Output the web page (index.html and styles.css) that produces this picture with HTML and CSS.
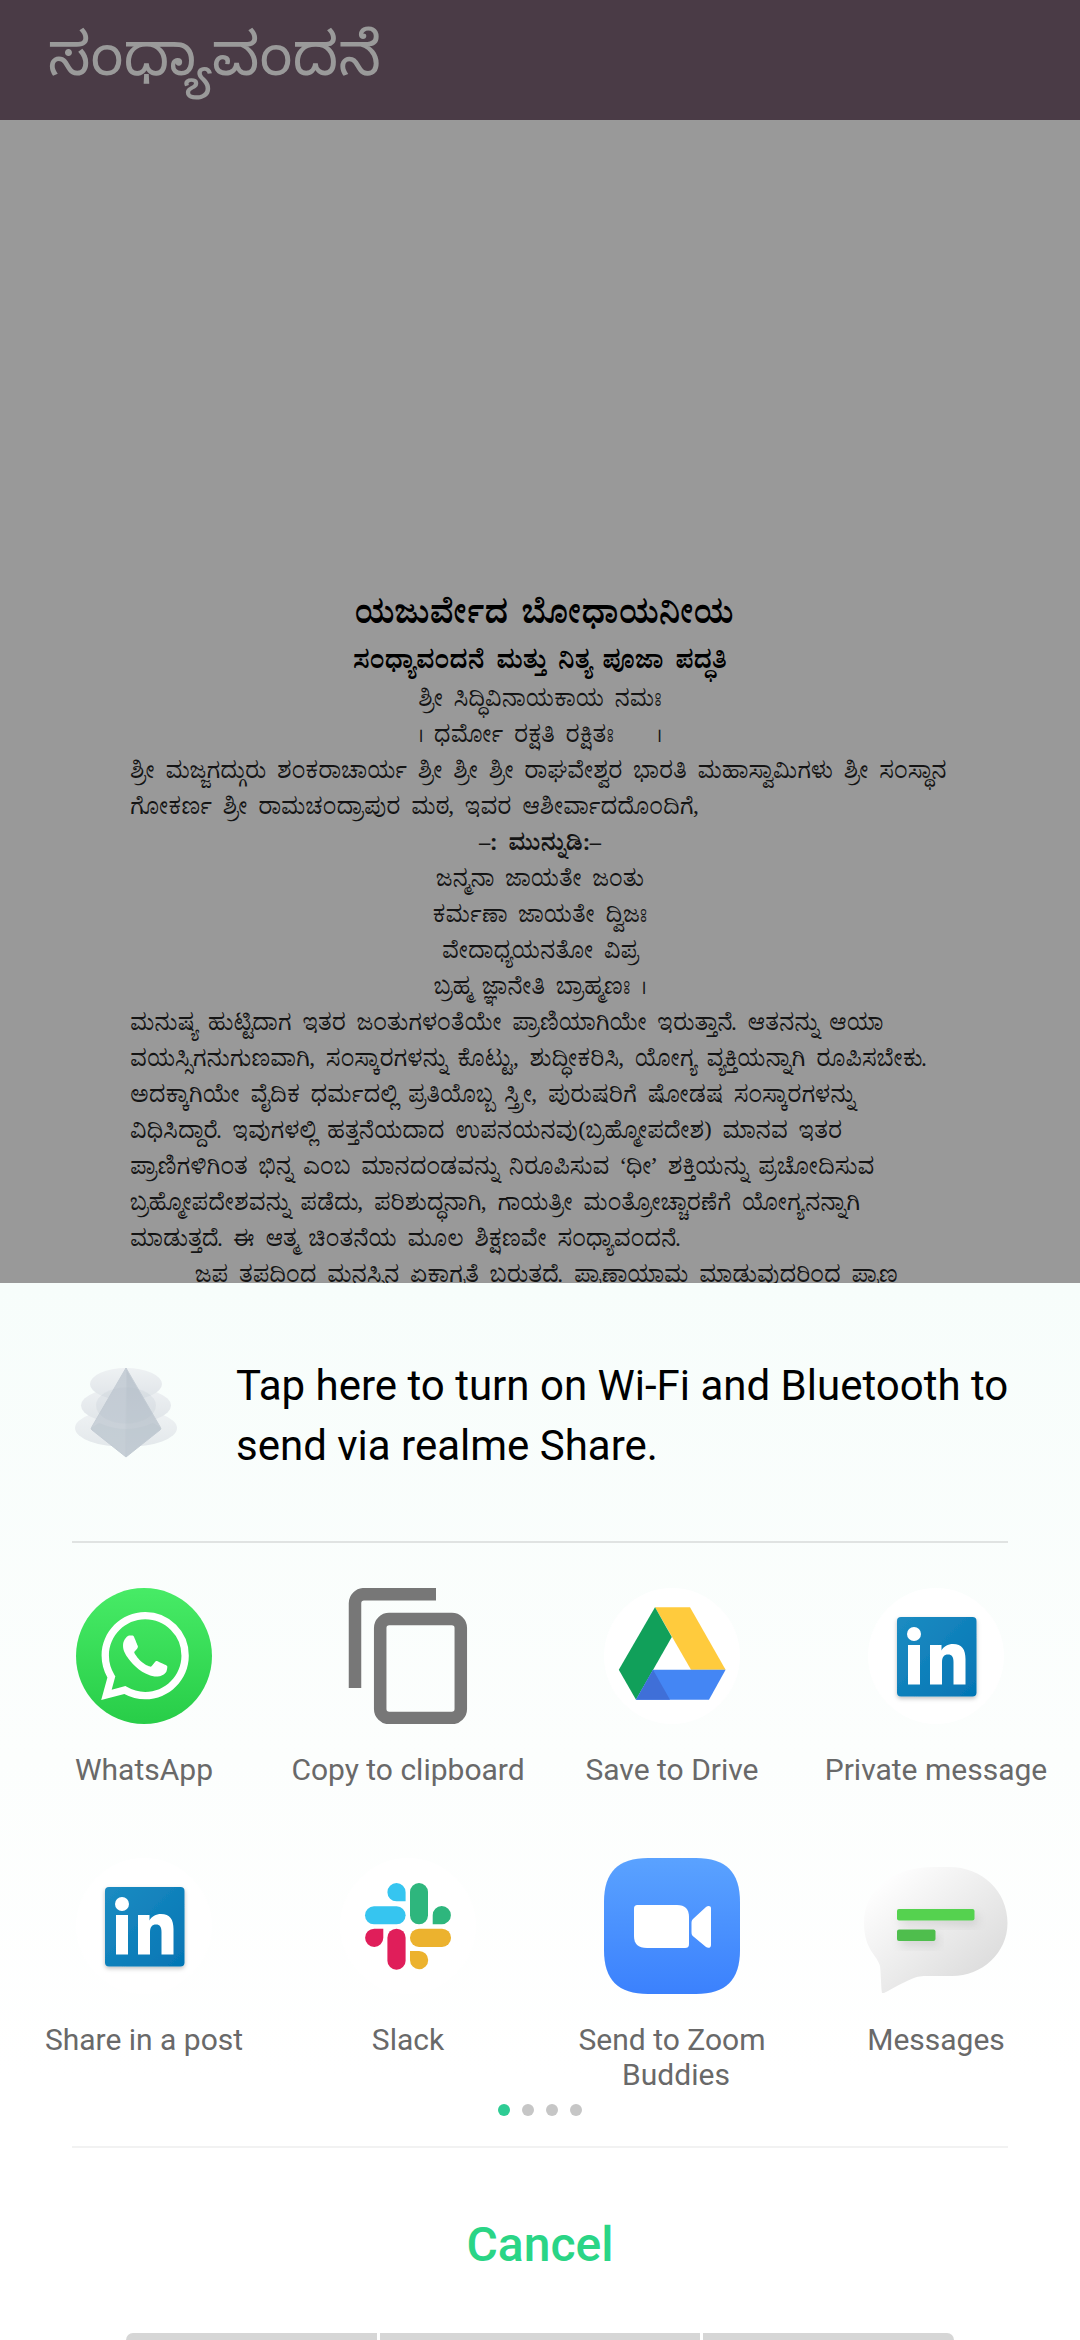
FILE: index.html
```html
<!DOCTYPE html>
<html lang="kn">
<head>
<meta charset="utf-8">
<title>ಸಂಧ್ಯಾವಂದನೆ</title>
<link rel="stylesheet" href="styles.css">
</head>
<body>
<header class="appbar"><h1 class="apptitle">ಸಂಧ್ಯಾವಂದನೆ</h1></header>
<main class="doc">
  <p class="line center title">ಯಜುರ್ವೇದ ಬೋಧಾಯನೀಯ</p>
  <p class="line center sub">ಸಂಧ್ಯಾವಂದನೆ ಮತ್ತು ನಿತ್ಯ ಪೂಜಾ ಪದ್ಧತಿ</p>
  <p class="line center">ಶ್ರೀ ಸಿದ್ಧಿವಿನಾಯಕಾಯ ನಮಃ</p>
  <p class="line center">। ಧರ್ಮೋ ರಕ್ಷತಿ ರಕ್ಷಿತಃ &nbsp; &nbsp;।</p>
  <p class="line">ಶ್ರೀ ಮಜ್ಜಗದ್ಗುರು ಶಂಕರಾಚಾರ್ಯ ಶ್ರೀ ಶ್ರೀ ಶ್ರೀ ರಾಘವೇಶ್ವರ ಭಾರತಿ ಮಹಾಸ್ವಾಮಿಗಳು ಶ್ರೀ ಸಂಸ್ಥಾನ</p>
  <p class="line">ಗೋಕರ್ಣ ಶ್ರೀ ರಾಮಚಂದ್ರಾಪುರ ಮಠ, ಇವರ ಆಶೀರ್ವಾದದೊಂದಿಗೆ,</p>
  <p class="line center strong">–: ಮುನ್ನುಡಿ:–</p>
  <p class="line center">ಜನ್ಮನಾ ಜಾಯತೇ ಜಂತು</p>
  <p class="line center">ಕರ್ಮಣಾ ಜಾಯತೇ ದ್ವಿಜಃ</p>
  <p class="line center">ವೇದಾಧ್ಯಯನತೋ ವಿಪ್ರ</p>
  <p class="line center">ಬ್ರಹ್ಮ ಜ್ಞಾನೇತಿ ಬ್ರಾಹ್ಮಣಃ ।</p>
  <p class="line">ಮನುಷ್ಯ ಹುಟ್ಟಿದಾಗ ಇತರ ಜಂತುಗಳಂತೆಯೇ ಪ್ರಾಣಿಯಾಗಿಯೇ ಇರುತ್ತಾನೆ. ಆತನನ್ನು ಆಯಾ</p>
  <p class="line">ವಯಸ್ಸಿಗನುಗುಣವಾಗಿ, ಸಂಸ್ಕಾರಗಳನ್ನು ಕೊಟ್ಟು, ಶುದ್ಧೀಕರಿಸಿ, ಯೋಗ್ಯ ವ್ಯಕ್ತಿಯನ್ನಾಗಿ ರೂಪಿಸಬೇಕು.</p>
  <p class="line">ಅದಕ್ಕಾಗಿಯೇ ವೈದಿಕ ಧರ್ಮದಲ್ಲಿ ಪ್ರತಿಯೊಬ್ಬ ಸ್ತ್ರೀ, ಪುರುಷರಿಗೆ ಷೋಡಷ ಸಂಸ್ಕಾರಗಳನ್ನು</p>
  <p class="line">ವಿಧಿಸಿದ್ದಾರೆ. ಇವುಗಳಲ್ಲಿ ಹತ್ತನೆಯದಾದ ಉಪನಯನವು(ಬ್ರಹ್ಮೋಪದೇಶ) ಮಾನವ ಇತರ</p>
  <p class="line">ಪ್ರಾಣಿಗಳಿಗಿಂತ ಭಿನ್ನ ಎಂಬ ಮಾನದಂಡವನ್ನು ನಿರೂಪಿಸುವ ‘ಧೀ’ ಶಕ್ತಿಯನ್ನು ಪ್ರಚೋದಿಸುವ</p>
  <p class="line">ಬ್ರಹ್ಮೋಪದೇಶವನ್ನು ಪಡೆದು, ಪರಿಶುದ್ಧನಾಗಿ, ಗಾಯತ್ರೀ ಮಂತ್ರೋಚ್ಚಾರಣೆಗೆ ಯೋಗ್ಯನನ್ನಾಗಿ</p>
  <p class="line">ಮಾಡುತ್ತದೆ. ಈ ಆತ್ಮ ಚಿಂತನೆಯ ಮೂಲ ಶಿಕ್ಷಣವೇ ಸಂಧ್ಯಾವಂದನೆ.</p>
  <p class="line indent">ಜಪ ತಪದಿಂದ ಮನಸ್ಸಿನ ಏಕಾಗ್ರತೆ ಬರುತ್ತದೆ. ಪ್ರಾಣಾಯಾಮ ಮಾಡುವುದರಿಂದ ಪ್ರಾಣ</p>
</main>
<section class="sheet">
  <div class="nearby">
    <svg class="nearby-icon" viewBox="0 0 102 91">
      <defs>
        <linearGradient id="e1" x1="0" y1="0" x2="0" y2="1"><stop offset="0" stop-color="#eef1f3"/><stop offset="1" stop-color="#dfe4e8"/></linearGradient>
        <linearGradient id="kl" x1="0" y1="0" x2="0" y2="1"><stop offset="0" stop-color="#c6ced6"/><stop offset="1" stop-color="#ccd3da"/></linearGradient>
        <linearGradient id="kr" x1="0" y1="0" x2="0" y2="1"><stop offset="0" stop-color="#bdc6cf"/><stop offset="1" stop-color="#c8d0d7"/></linearGradient>
      </defs>
      <ellipse cx="51" cy="61" rx="51" ry="19" fill="url(#e1)" opacity=".85"/>
      <ellipse cx="51" cy="38.500" rx="45" ry="18" fill="url(#e1)"/>
      <ellipse cx="51" cy="17" rx="36" ry="16" fill="url(#e1)"/>
      <path d="M51 1 16.500 60.500Q15.500 62 17 63L51 90Z" fill="url(#kl)" stroke="#c6ced6" stroke-linejoin="round"/>
      <path d="M51 1 85.500 60.500Q86.500 62 85 63L51 90Z" fill="url(#kr)" stroke="#c6ced6" stroke-linejoin="round"/>
      <ellipse cx="51" cy="38.500" rx="30" ry="18" fill="#b3bdc7" opacity=".18"/>
      <path d="M24 56Q51 68 78 56L85.500 60.500Q86.500 62 85 63L51 90 17 63Q15.500 62 16.500 60.500Z" fill="#b3bdc7" opacity=".22"/>
    </svg>
    <p class="nearby-text">Tap here to turn on Wi-Fi and Bluetooth to send via realme Share.</p>
  </div>
  <div class="rule"></div>
  <div class="apps">
    <div class="app">
      <svg class="icon" viewBox="0 0 136 136">
        <defs><linearGradient id="wa" x1="0" y1="0" x2="0" y2="1"><stop offset="0" stop-color="#47eb66"/><stop offset="1" stop-color="#28cd48"/></linearGradient></defs>
        <circle cx="68" cy="68" r="68" fill="url(#wa)"/>
        <path transform="translate(25 24) scale(3.667)" fill="#fff" d="M17.472 14.382c-.297-.149-1.758-.867-2.03-.967-.273-.099-.471-.148-.67.15-.197.297-.767.966-.94 1.164-.173.199-.347.223-.644.075-.297-.15-1.255-.463-2.39-1.475-.883-.788-1.48-1.761-1.653-2.059-.173-.297-.018-.458.13-.606.134-.133.298-.347.446-.52.149-.174.198-.298.298-.497.099-.198.05-.371-.025-.52-.075-.149-.669-1.612-.916-2.207-.242-.579-.487-.5-.669-.51-.173-.008-.371-.01-.57-.01-.198 0-.52.074-.792.372-.272.297-1.04 1.016-1.04 2.479 0 1.462 1.065 2.875 1.213 3.074.149.198 2.096 3.2 5.077 4.487.709.306 1.262.489 1.694.625.712.227 1.36.195 1.871.118.571-.085 1.758-.719 2.006-1.413.248-.694.248-1.289.173-1.413-.074-.124-.272-.198-.57-.347m-5.421 7.403h-.004a9.87 9.87 0 01-5.031-1.378l-.361-.214-3.741.982.998-3.648-.235-.374a9.86 9.86 0 01-1.51-5.26c.001-5.45 4.436-9.884 9.888-9.884 2.64 0 5.122 1.03 6.988 2.898a9.825 9.825 0 012.893 6.994c-.003 5.45-4.437 9.884-9.885 9.884m8.413-18.297A11.815 11.815 0 0012.05 0C5.495 0 .16 5.335.157 11.892c0 2.096.547 4.142 1.588 5.945L.057 24l6.305-1.654a11.882 11.882 0 005.683 1.448h.005c6.554 0 11.89-5.335 11.893-11.893a11.821 11.821 0 00-3.48-8.413z"/>
      </svg>
      <span class="label">WhatsApp</span>
    </div>
    <div class="app">
      <svg class="icon" viewBox="0 0 136 136">
        <path d="M96 6.200H24a9 9 0 0 0-9 9V100" fill="none" stroke="#777" stroke-width="12.500"/>
        <rect x="40.200" y="31" width="80.600" height="99" rx="9" fill="none" stroke="#777" stroke-width="12.500"/>
      </svg>
      <span class="label">Copy to clipboard</span>
    </div>
    <div class="app">
      <svg class="icon" viewBox="0 0 136 136">
        <circle cx="68" cy="68" r="68" fill="#fff"/>
        <path d="M51 19.300 86 19.300 121.600 81.700H87Z" fill="#ffcb3d"/>
        <path d="M51 19.300 67.800 49 32 111.700 14.800 81.700Z" fill="#11a05a"/>
        <path d="M49 81.700H121.600L105 111.700H32Z" fill="#4486f4"/>
        <path d="M49 81.700 66 111.700H32Z" fill="#3f6fd8"/>
      </svg>
      <span class="label">Save to Drive</span>
    </div>
    <div class="app">
      <svg class="icon" viewBox="0 0 136 136">
        <defs>
          <linearGradient id="li" x1="0" y1="0" x2="1" y2="1"><stop offset="0" stop-color="#1c8cc2"/><stop offset="1" stop-color="#0475b4"/></linearGradient>
          <filter id="lish" x="-20%" y="-20%" width="140%" height="140%"><feDropShadow dx="0" dy="2" stdDeviation="2" flood-color="#000" flood-opacity=".25"/></filter>
          <g id="linkedin">
            <circle cx="68" cy="68" r="68" fill="#fff"/>
            <rect x="29" y="29" width="79.500" height="79.500" rx="4" fill="url(#li)" filter="url(#lish)"/>
            <circle cx="46" cy="46" r="7" fill="#fff"/>
            <rect x="40" y="57" width="12" height="39.500" fill="#fff"/>
            <path d="M62 57H73.500V62.500C75.500 58.500 80 56 85 56 94 56 97.500 61.500 97.500 71V96.500H85.500V74C85.500 69 84 66.500 80 66.500 76 66.500 74 69 74 74V96.500H62Z" fill="#fff"/>
          </g>
        </defs>
        <use href="#linkedin"/>
      </svg>
      <span class="label">Private message</span>
    </div>
    <div class="app">
      <svg class="icon" viewBox="0 0 136 136"><use href="#linkedin"/></svg>
      <span class="label">Share in a post</span>
    </div>
    <div class="app">
      <svg class="icon" viewBox="0 0 136 136">
        <circle cx="68" cy="68" r="68" fill="#fff"/>
        <g transform="translate(25 25)">
          <rect x="0" y="23.300" width="40.600" height="18" rx="9" fill="#36c5f0"/>
          <path d="M40.600 18.300H31.500A9.100 9.100 0 1 1 40.600 9.200Z" fill="#36c5f0"/>
          <rect x="45" y="0" width="18" height="41.300" rx="9" fill="#2eb67d"/>
          <path d="M67.700 41.300V32.300A9.100 9.100 0 1 1 76.800 41.300Z" fill="#2eb67d"/>
          <rect x="22.400" y="45.700" width="18.200" height="41" rx="9" fill="#e01e5a"/>
          <path d="M18.300 45.700V54.800A9.100 9.100 0 1 1 9.200 45.700Z" fill="#e01e5a"/>
          <rect x="45" y="45.700" width="41" height="18.300" rx="9" fill="#ecb22e"/>
          <path d="M45 68H54A9.100 9.100 0 1 1 45 77.200Z" fill="#ecb22e"/>
        </g>
      </svg>
      <span class="label">Slack</span>
    </div>
    <div class="app">
      <svg class="icon" viewBox="0 0 136 136">
        <defs><linearGradient id="zm" x1="0" y1="0" x2="0" y2="1"><stop offset="0" stop-color="#5aa2ff"/><stop offset="1" stop-color="#3b81fd"/></linearGradient></defs>
        <path d="M44 0H92C122 0 136 14 136 44V92C136 122 122 136 92 136H44C14 136 0 122 0 92V44C0 14 14 0 44 0Z" fill="url(#zm)"/>
        <path d="M34 47H73C81 47 85 51 85 59V86C85 89 83.500 90 81 90H43C34 90 30 86 30 78V51C30 48 31 47 34 47Z" fill="#fff"/>
        <path d="M87.500 65C87.500 63 88 62 89.500 60.500L102 49C104 47.500 107 47.500 107 50.500V87C107 90 104 90.500 102 89L90 79C88 77.500 87.500 76.500 87.500 74Z" fill="#fff"/>
      </svg>
      <span class="label">Send to Zoom <span class="label-shift">Buddies</span></span>
    </div>
    <div class="app">
      <svg class="icon icon-wide" viewBox="0 0 144 136">
        <defs>
          <linearGradient id="msg" x1="0" y1="0" x2="1" y2="1"><stop offset=".1" stop-color="#fff"/><stop offset=".85" stop-color="#dcdcdc"/></linearGradient>
          <filter id="barsh" x="-20%" y="-40%" width="140%" height="220%"><feDropShadow dx="3" dy="5" stdDeviation="5" flood-color="#000" flood-opacity=".1"/></filter>
        </defs>
        <path d="M18 135C17 130 17 115 16 108 14 98 0 92 0 65 0 30 30 9 70 9H85C118 9 143.500 33 143.500 65 143.500 95 118 118 88 118H62C50 118 45 122 20 135Z" fill="url(#msg)"/>
        <rect x="33" y="51" width="77.500" height="11.500" rx="2" fill="#55d24f" filter="url(#barsh)"/>
        <rect x="33" y="71.500" width="38.500" height="11.500" rx="2" fill="#4fbe4d" filter="url(#barsh)"/>
      </svg>
      <span class="label">Messages</span>
    </div>
  </div>
  <div class="dots"><i class="dot dot-on"></i><i class="dot"></i><i class="dot"></i><i class="dot"></i></div>
  <div class="rule rule-light"></div>
  <div class="cancel">Cancel</div>
  <div class="navbar"><i class="nav-seg nav-left"></i><i class="nav-seg nav-mid"></i><i class="nav-seg nav-right"></i></div>
</section>
</body>
</html>
```
FILE: styles.css
```css
* { box-sizing: border-box; }
html, body { margin: 0; padding: 0; }
body {
  width: 1080px;
  height: 2340px;
  overflow: hidden;
  display: flex;
  flex-direction: column;
  background: #999;
  font-family: Roboto, "Noto Sans", sans-serif;
}
.appbar {
  height: 120px;
  flex: none;
  background: #4a3b46;
  display: flex;
  align-items: center;
  padding: 12px 0 0 48px;
}
.apptitle {
  margin: 0;
  font-family: "Noto Sans Kannada", "Noto Sans", "DejaVu Sans", sans-serif;
  font-weight: 400;
  font-size: 60px;
  color: #9a9a9a;
}
.doc {
  height: 1163px;
  flex: none;
  overflow: hidden;
  padding: 482px 130px 0;
  font-family: "Noto Serif Kannada", "Noto Sans Kannada", "Noto Sans", "DejaVu Sans", sans-serif;
  color: #141414;
}
.line {
  margin: 0;
  height: 36px;
  line-height: 36px;
  font-size: 22.5px;
  word-spacing: 5.5px;
  white-space: nowrap;
}
.center { text-align: center; }
.title { font-size: 32px; font-weight: 700; height: 46px; padding-left: 8px; color: #000; }
.sub { font-size: 24.5px; font-weight: 700; height: 38px; color: #000; }
.strong { font-weight: 700; }
.indent { padding-left: 65px; }
.sheet {
  flex: 1;
  display: flex;
  flex-direction: column;
  background: linear-gradient(#f7fdfb, #fcfefd 45%, #fff 75%);
}
.nearby {
  display: flex;
  align-items: flex-start;
  gap: 59px;
  height: 258px;
  padding: 73px 60px 0 75px;
}
.nearby-icon { width: 102px; height: 91px; flex: none; margin-top: 11px; }
.nearby-text {
  margin: 0;
  font-size: 42px;
  line-height: 60px;
  color: #000;
}
.rule {
  height: 2px;
  margin: 0 72px;
  background: #e0e3e2;
  flex: none;
}
.rule-light { background: #f2f2f2; margin-top: 30px; }
.apps {
  margin: 45px 12px 0;
  display: grid;
  grid-template-columns: repeat(4, 264px);
  grid-template-rows: 270px 234px;
}
.app {
  display: flex;
  flex-direction: column;
  align-items: center;
}
.icon { width: 136px; height: 136px; flex: none; display: block; }
.icon-wide { width: 144px; margin: 0 -4px; }
.label {
  margin-top: 28px;
  font-size: 30px;
  line-height: 35px;
  color: #696969;
  text-align: center;
  width: 264px;
}
.label-shift { display: block; padding-left: 8px; }
.dots {
  display: flex;
  justify-content: center;
  gap: 12px;
  margin-top: 12px;
  flex: none;
}
.dot { width: 12px; height: 12px; border-radius: 50%; background: #c6c6c6; }
.dot-on { background: #2ecc94; }
.cancel {
  flex: 1;
  display: flex;
  align-items: center;
  justify-content: center;
  padding-top: 8px;
  font-size: 48px;
  font-weight: 500;
  color: #2ad586;
}
.navbar {
  height: 7px;
  flex: none;
  display: flex;
  gap: 3px;
  padding: 0 126px;
}
.nav-seg { background: #d6d6d6; height: 7px; }
.nav-left { width: 251px; border-top-left-radius: 7px; }
.nav-mid { width: 320px; }
.nav-right { width: 251px; border-top-right-radius: 7px; }
```
